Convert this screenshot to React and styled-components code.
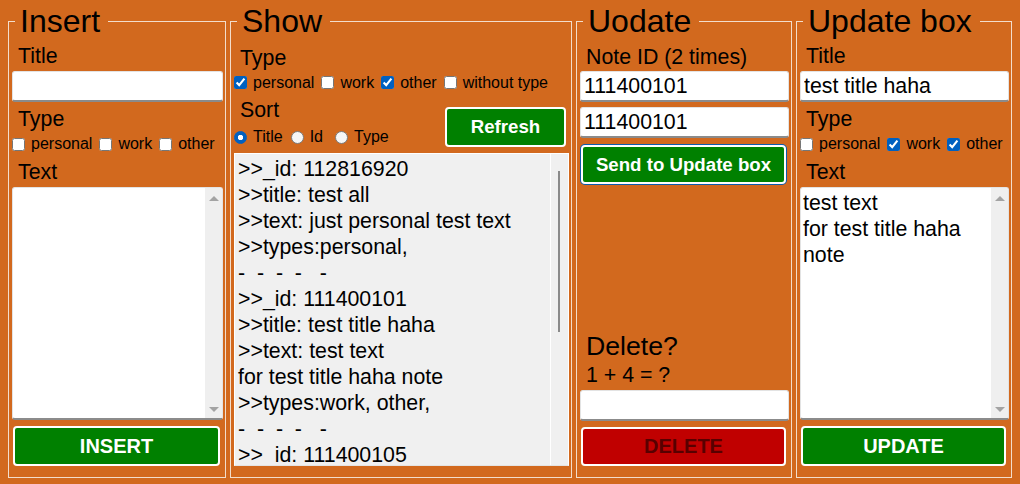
import React from 'react';
import styled, { createGlobalStyle } from 'styled-components';

const GlobalStyle = createGlobalStyle`
	body { margin: 0; background: #d2691e; font-family: "Liberation Sans", Arial, sans-serif; color: #000; }
	* { box-sizing: border-box; }
`

const Page = styled.div`
	display: grid;
	grid-template-columns: 218px 342px 216px 216px;
	column-gap: 4px;
	padding: 3px 0 0 8px;
`
const Box = styled.fieldset`
	margin: 0;
	min-width: 0;
	height: 475px;
	padding: 0 2px 11px 3px;
	border: 1px solid #f3ddcb;
	display: flex;
	flex-direction: column;
`
const Legend = styled.legend`
	font-size: 32px;
	line-height: 36px;
	padding: 0 8px 0 5px;
	margin-left: 3px;
`
const Label = styled.div`
	font-size: ${p => p.$big ? '26.67px' : '21.33px'};
	line-height: ${p => p.$big ? '30px' : '24px'};
	padding-left: ${p => p.$indent ?? 6}px;
	margin-top: ${p => p.$mt || 0}px;
	white-space: nowrap;
`
const TextInput = styled.input`
	display: block;
	width: 100%;
	height: 31px;
	margin: ${p => p.$mt || 0}px 0 0;
	padding: 0 3px;
	border: 1px solid #e3e3e3;
	border-bottom: 2px solid #8b8b8b;
	border-radius: 3px;
	background: #fff;
	font: 21.33px "Liberation Sans", Arial, sans-serif;
	outline: none;
`
const OptionRow = styled.div`
	display: flex;
	align-items: center;
	height: 20px;
	margin-top: ${p => p.$mt || 0}px;
	font-size: 16px;
	white-space: nowrap;
`
const Option = styled.label`
	display: flex;
	align-items: center;
	margin-right: ${p => p.$after ?? 7}px;
`
const Check = styled.input.attrs({ type: 'checkbox' })`
	width: 13px;
	height: 13px;
	margin: 0 6px 0 0;
	accent-color: #0060c0;
`
const Radio = styled.input.attrs({ type: 'radio' })`
	appearance: none;
	width: 13px;
	height: 13px;
	margin: 0 6px 0 0;
	border-radius: 50%;
	border: 1px solid #7a7a7a;
	background: #f6f6f6;
	&:checked {
		border-color: #0060c0;
		background: radial-gradient(circle, #fff 0 2.4px, #0060c0 3px);
	}
`
const Button = styled.button`
	display: block;
	height: ${p => p.$h || 40}px;
	width: ${p => p.$w ? p.$w + 'px' : 'auto'};
	margin: ${p => p.$mt || 0}px 3px 0 1px;
	padding: 0;
	background: ${p => p.$danger ? '#c00000' : '#008000'};
	color: ${p => p.$danger ? '#580000' : '#fff'};
	border: 2px solid #fff;
	border-radius: 4px;
	font: bold ${p => p.$fs || 20}px "Liberation Sans", Arial, sans-serif;
	box-shadow: ${p => p.$focus ? '0 0 0 1px #0b5cad' : 'none'};
`
const TextAreaWrap = styled.div`
	display: flex;
	height: 233px;
	margin-top: 3px;
	background: #fff;
	border: 1px solid #e3e3e3;
	border-bottom: 2px solid #8b8b8b;
	border-radius: 3px;
	overflow: hidden;
`
const TextBox = styled.textarea`
	flex: 1;
	min-width: 0;
	border: 0;
	resize: none;
	outline: none;
	padding: 2px 2px;
	background: transparent;
	overflow: hidden;
	font: 21.33px/26px "Liberation Sans", Arial, sans-serif;
`
const ScrollTrack = styled.div`
	width: 17px;
	background: #efefef;
	display: flex;
	flex-direction: column;
	justify-content: space-between;
	align-items: center;
	padding: 8px 0 6px;
`
const Arrow = styled.span`
	width: 0;
	height: 0;
	border-left: 5px solid transparent;
	border-right: 5px solid transparent;
	${p => p.$down ? 'border-top: 5px solid #a3a3a3;' : 'border-bottom: 5px solid #a3a3a3;'}
`
const SortRow = styled.div`
	display: flex;
	justify-content: space-between;
	align-items: flex-start;
	margin-top: 6px;
`
const Output = styled.div`
	display: flex;
	height: 313px;
	margin-top: 6px;
	background: #f0f0f0;
	border: 1px solid #fff;
	border-bottom-color: #e4e4e4;
`
const OutputText = styled.div`
	flex: 1;
	overflow: hidden;
	padding: 2px 3px;
	white-space: pre;
	font-size: 21.33px;
	line-height: 26px;
`
const OutputTrack = styled.div`
	width: 18px;
	border-left: 1px solid #fff;
	padding: 17px 0 0 7px;
`
const Thumb = styled.div`
	width: 2px;
	height: 161px;
	background: #8a8a8a;
`
const DeleteGroup = styled.div`
	margin-top: auto;
	display: flex;
	flex-direction: column;
`

const notes = `>>_id: 112816920
>>title: test all
>>text: just personal test text
>>types:personal,
-  -  -  -   -
>>_id: 111400101
>>title: test title haha
>>text: test text
for test title haha note
>>types:work, other,
-  -  -  -   -
>>_id: 111400105`

const TypeOptions = ({ checked = [] }) => (
	<OptionRow $mt={3}>
		<Option><Check defaultChecked={checked.includes('personal')} />personal</Option>
		<Option><Check defaultChecked={checked.includes('work')} />work</Option>
		<Option $after={0}><Check defaultChecked={checked.includes('other')} />other</Option>
	</OptionRow>
)

const NoteArea = ({ value }) => (
	<TextAreaWrap>
		<TextBox defaultValue={value} />
		<ScrollTrack><Arrow /><Arrow $down /></ScrollTrack>
	</TextAreaWrap>
)

export default function App() {
	return (
		<Page>
			<GlobalStyle />
			<Box>
				<Legend>Insert</Legend>
				<Label $mt={5}>Title</Label>
				<TextInput $mt={3} />
				<Label $mt={5}>Type</Label>
				<TypeOptions />
				<Label $mt={6}>Text</Label>
				<NoteArea value="" />
				<Button $mt={6}>INSERT</Button>
			</Box>

			<Box>
				<Legend>Show</Legend>
				<Label $mt={7}>Type</Label>
				<OptionRow $mt={3}>
					<Option><Check defaultChecked />personal</Option>
					<Option><Check />work</Option>
					<Option><Check defaultChecked />other</Option>
					<Option $after={0}><Check />without type</Option>
				</OptionRow>
				<SortRow>
					<div>
						<Label>Sort</Label>
						<OptionRow $mt={5}>
							<Option $after={8}><Radio name="sort" defaultChecked />Title</Option>
							<Option $after={12}><Radio name="sort" />Id</Option>
							<Option $after={0}><Radio name="sort" />Type</Option>
						</OptionRow>
					</div>
					<Button $mt={9} $w={121} $h={40} $fs={18.67}>Refresh</Button>
				</SortRow>
				<Output>
					<OutputText>{notes}</OutputText>
					<OutputTrack><Thumb /></OutputTrack>
				</Output>
			</Box>

			<Box>
				<Legend>Uodate</Legend>
				<Label $mt={6}>Note ID (2 times)</Label>
				<TextInput $mt={2} defaultValue="111400101" />
				<TextInput $mt={5} defaultValue="111400101" />
				<Button $mt={7} $h={39} $fs={18.67} $focus>Send to Update box</Button>
				<DeleteGroup>
					<Label $big>Delete?</Label>
					<Label $mt={2}>1 + 4 = ?</Label>
					<TextInput $mt={3} />
					<Button $mt={6} $h={39} $danger>DELETE</Button>
				</DeleteGroup>
			</Box>

			<Box>
				<Legend>Update box</Legend>
				<Label $mt={5}>Title</Label>
				<TextInput $mt={3} defaultValue="test title haha" />
				<Label $mt={5}>Type</Label>
				<TypeOptions checked={['work', 'other']} />
				<Label $mt={6}>Text</Label>
				<NoteArea value={'test text\nfor test title haha\nnote'} />
				<Button $mt={6}>UPDATE</Button>
			</Box>
		</Page>
	);
}
